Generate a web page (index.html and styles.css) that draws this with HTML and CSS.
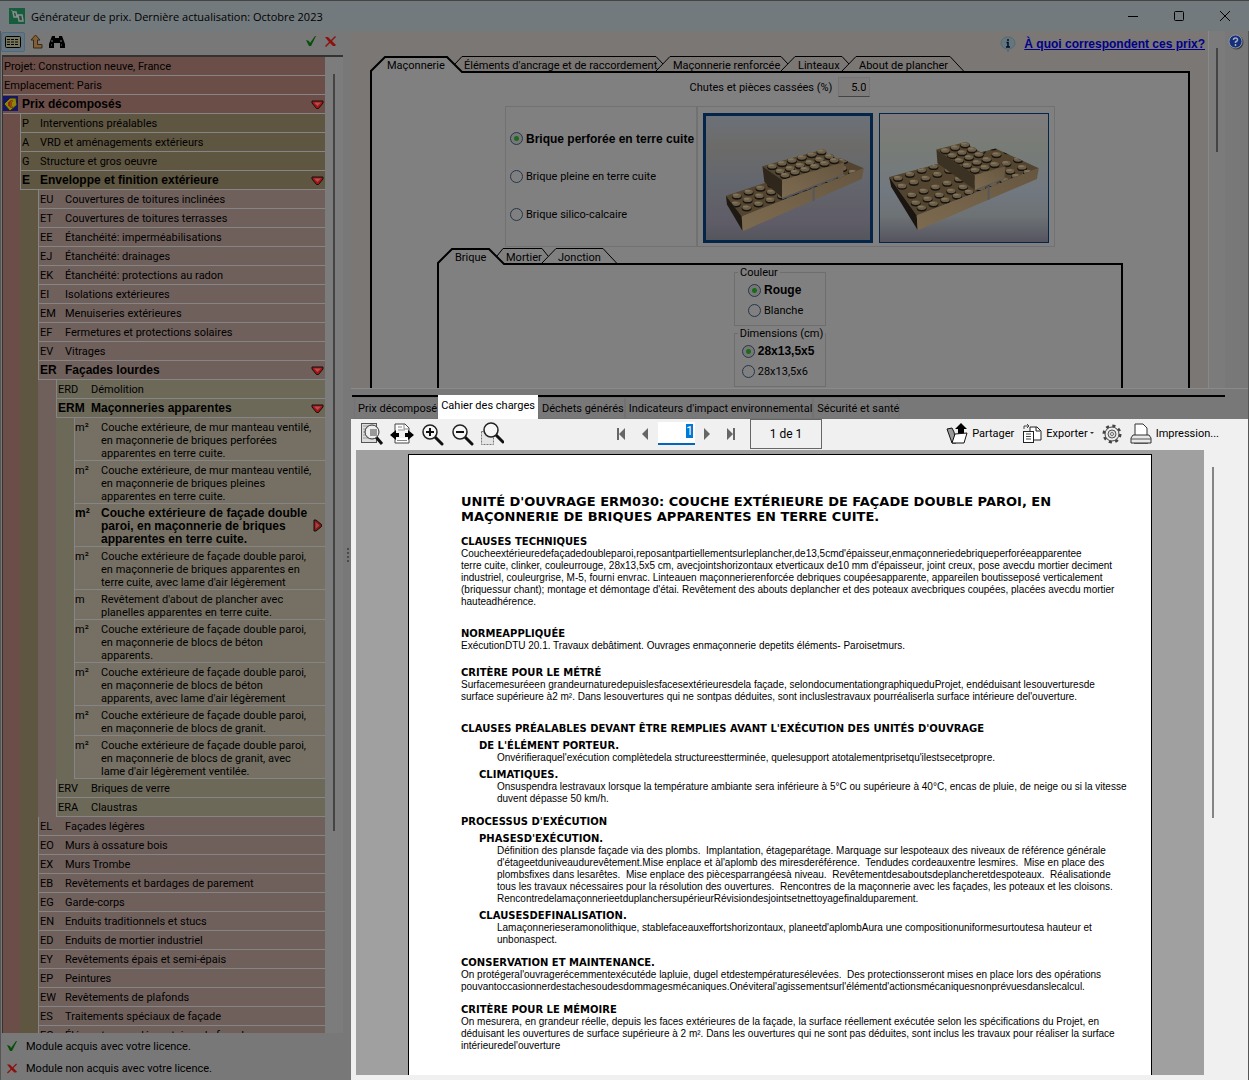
FILE: index.html
```
<!DOCTYPE html>
<html lang="fr">
<head>
    <meta charset="UTF-8">
    <meta name="viewport" content="width=device-width, initial-scale=1.0">
    <title>Générateur de prix</title>
    <link rel="stylesheet" href="styles.css">
</head>
<body>
    <!-- Shared icons -->
    <svg class="defs" width="0" height="0">
        <defs>
            <symbol id="check" viewBox="0 0 10 11"><path d="M0 4l3 1 1 2 5-7 1 0-5 10-2 0z" fill="#064f06"/></symbol>
            <symbol id="cross" viewBox="0 0 11 11"><path d="M0 1l3 0 3 3 4-4 1 1-4 4 4 4-1 1-2 0-3-3-4 4-1-1 4-4z" fill="#8d1010"/></symbol>
            <symbol id="down" viewBox="0 0 13 10"><path d="M1 1h11v2L7.500 8.500h-2L1 3z" fill="#a81414" stroke="#111" stroke-width="1"/><path d="M3 2.500h7L6.500 6z" fill="#b05050"/></symbol>
            <symbol id="right" viewBox="0 0 10 13"><path d="M1 1h2l5.500 4.500v2L3 12H1z" fill="#8d1414" stroke="#111" stroke-width="1"/><path d="M2.500 3v7l4-3.500z" fill="#a04545"/></symbol>
            <symbol id="glass" viewBox="0 0 24 24"><path d="M14 14l7 7" stroke="#111" stroke-width="3" stroke-linecap="round"/><circle cx="9" cy="9" r="7" fill="#f7f7f7" stroke="#222" stroke-width="1.500"/></symbol>
            <g id="hole"><ellipse cx="0" cy="1" rx="5" ry="3" fill="#16130e"/><ellipse rx="4.500" ry="2.400" fill="#6b5e48"/><ellipse cx="-1" cy="-1" rx="3" ry="1" fill="#82745c"/></g>
            <g id="row"><use href="#hole"/><use href="#hole" x="12" y="-4"/><use href="#hole" x="24" y="-8"/><use href="#hole" x="36" y="-12"/><use href="#hole" x="48" y="-16"/><use href="#hole" x="60" y="-20"/><use href="#hole" x="72" y="-24"/><use href="#hole" x="84" y="-28"/><use href="#hole" x="96" y="-32"/><use href="#hole" x="108" y="-36"/></g>
            <g id="short"><use href="#hole"/><use href="#hole" x="10" y="-3"/><use href="#hole" x="20" y="-6"/></g>
            <linearGradient id="clay" x1="0" y1="1" x2="1" y2="0"><stop offset="0" stop-color="#7d6b50"/><stop offset="1" stop-color="#665640"/></linearGradient>
            <clipPath id="slab1"><path d="M22 83L138 45l24 10L38 104z"/></clipPath>
            <clipPath id="slab2"><path d="M9 64L117 35l44 20L37 103z"/></clipPath>
        </defs>
    </svg>

    <header class="titlebar">
        <svg class="app-icon" width="16" height="16" viewBox="0 0 16 16"><rect width="16" height="16" fill="#175c3d"/><path d="M2 2l3 2" stroke="#6f7d77"/><path d="M4 4h3l1 5H5zM9 7h4l1 6h-4z" fill="#33493f" stroke="#85918c" stroke-width="1.500"/></svg>
        <h1>Générateur de prix. Dernière actualisation: Octobre 2023</h1>
        <div class="window-buttons">
            <button aria-label="Réduire"><svg width="12" height="12"><path d="M1 6.500h10" stroke="#000"/></svg></button>
            <button aria-label="Agrandir"><svg width="12" height="12"><rect x="1.500" y="1.500" width="9" height="9" rx="1" fill="none" stroke="#000"/></svg></button>
            <button aria-label="Fermer"><svg width="12" height="12"><path d="M1 1l10 10M11 1L1 11" stroke="#000"/></svg></button>
        </div>
    </header>

    <div class="workspace">
        <!-- Price tree -->
        <aside class="sidebar">
            <div class="side-tools">
                <button class="pressed" aria-label="Arbre"><svg width="16" height="12"><rect x=".5" y=".5" width="15" height="11" rx="1" fill="#77775c" stroke="#000"/><path d="M2 3.500h12M2 6h12M2 8.500h12" stroke="#000" stroke-dasharray="3 1"/></svg></button>
                <button aria-label="Remonter"><svg width="14" height="15"><path d="M5.500 1L1 6h2.500v8H12v-3.500H7.500V6H10z" fill="#80603a" stroke="#3c2710"/></svg></button>
                <button aria-label="Rechercher"><svg width="16" height="14"><path d="M3 1h3v2h4V1h3l3 8v4h-5V8H5v5H0V9z" fill="#000"/><path d="M3 5v2M2 10h1M12 5v2M12 10h1" stroke="#777"/></svg></button>
                <span class="licence">
                    <svg width="10" height="11"><use href="#check"/></svg>
                    <svg width="11" height="11"><use href="#cross"/></svg>
                </span>
            </div>
            <div class="tree">
                <div class="row red top">Projet: Construction neuve, France</div>
                <div class="row red top">Emplacement: Paris</div>
                <div class="row red open root"><svg width="16" height="16"><rect width="15" height="15" fill="#14146a"/><path d="M1 8l6-6h6l1 7-7 6z" fill="#8d8408" stroke="#222"/><path d="M10 5q-4-1-4 3t4 3M5 7h4M5 9h4" fill="none" stroke="#8a1010"/></svg><b>Prix décomposés</b><svg class="arrow" width="13" height="10"><use href="#down"/></svg></div>
                <div class="branch red">
                    <div class="row khaki"><i>P</i>Interventions préalables</div>
                    <div class="row khaki"><i>A</i>VRD et aménagements extérieurs</div>
                    <div class="row khaki"><i>G</i>Structure et gros oeuvre</div>
                    <div class="row khaki open"><i>E</i>Enveloppe et finition extérieure<svg class="arrow" width="13" height="10"><use href="#down"/></svg></div>
                    <div class="branch khaki">
                        <div class="row pink"><i>EU</i>Couvertures de toitures inclinées</div>
                        <div class="row pink"><i>ET</i>Couvertures de toitures terrasses</div>
                        <div class="row pink"><i>EE</i>Étanchéité: imperméabilisations</div>
                        <div class="row pink"><i>EJ</i>Étanchéité: drainages</div>
                        <div class="row pink"><i>EK</i>Étanchéité: protections au radon</div>
                        <div class="row pink"><i>EI</i>Isolations extérieures</div>
                        <div class="row pink"><i>EM</i>Menuiseries extérieures</div>
                        <div class="row pink"><i>EF</i>Fermetures et protections solaires</div>
                        <div class="row pink"><i>EV</i>Vitrages</div>
                        <div class="row pink open"><i>ER</i>Façades lourdes<svg class="arrow" width="13" height="10"><use href="#down"/></svg></div>
                        <div class="branch pink">
                            <div class="row olive"><i>ERD</i>Démolition</div>
                            <div class="row olive open"><i>ERM</i>Maçonneries apparentes<svg class="arrow" width="13" height="10"><use href="#down"/></svg></div>
                            <div class="branch olive">
                                <div class="row unit"><i>m²</i><span>Couche extérieure, de mur manteau ventilé,<br>en maçonnerie de briques perforées<br>apparentes en terre cuite.</span></div>
                                <div class="row unit"><i>m²</i><span>Couche extérieure, de mur manteau ventilé,<br>en maçonnerie de briques pleines<br>apparentes en terre cuite.</span></div>
                                <div class="row unit open"><i>m²</i><span>Couche extérieure de façade double<br>paroi, en maçonnerie de briques<br>apparentes en terre cuite.</span><svg class="arrow" width="10" height="13"><use href="#right"/></svg></div>
                                <div class="row unit"><i>m²</i><span>Couche extérieure de façade double paroi,<br>en maçonnerie de briques apparentes en<br>terre cuite, avec lame d'air légèrement</span></div>
                                <div class="row unit"><i>m</i><span>Revêtement d'about de plancher avec<br>planelles apparentes en terre cuite.</span></div>
                                <div class="row unit"><i>m²</i><span>Couche extérieure de façade double paroi,<br>en maçonnerie de blocs de béton<br>apparents.</span></div>
                                <div class="row unit"><i>m²</i><span>Couche extérieure de façade double paroi,<br>en maçonnerie de blocs de béton<br>apparents, avec lame d'air légèrement</span></div>
                                <div class="row unit"><i>m²</i><span>Couche extérieure de façade double paroi,<br>en maçonnerie de blocs de granit.</span></div>
                                <div class="row unit"><i>m²</i><span>Couche extérieure de façade double paroi,<br>en maçonnerie de blocs de granit, avec<br>lame d'air légèrement ventilée.</span></div>
                            </div>
                            <div class="row olive"><i>ERV</i>Briques de verre</div>
                            <div class="row olive"><i>ERA</i>Claustras</div>
                        </div>
                        <div class="row pink"><i>EL</i>Façades légères</div>
                        <div class="row pink"><i>EO</i>Murs à ossature bois</div>
                        <div class="row pink"><i>EX</i>Murs Trombe</div>
                        <div class="row pink"><i>EB</i>Revêtements et bardages de parement</div>
                        <div class="row pink"><i>EG</i>Garde-corps</div>
                        <div class="row pink"><i>EN</i>Enduits traditionnels et stucs</div>
                        <div class="row pink"><i>ED</i>Enduits de mortier industriel</div>
                        <div class="row pink"><i>EY</i>Revêtements épais et semi-épais</div>
                        <div class="row pink"><i>EP</i>Peintures</div>
                        <div class="row pink"><i>EW</i>Revêtements de plafonds</div>
                        <div class="row pink"><i>ES</i>Traitements spéciaux de façade</div>
                        <div class="row pink"><i>EC</i>Éléments complémentaires de façade</div>
                    </div>
                </div>
                <div class="thumb"></div>
            </div>
            <div class="legend"><svg width="10" height="11"><use href="#check"/></svg>Module acquis avec votre licence.</div>
            <div class="legend"><svg width="10" height="11"><use href="#cross"/></svg>Module non acquis avec votre licence.</div>
            <div class="grip"></div>
        </aside>

        <main>
            <!-- Options of the selected unit -->
            <section class="options">
                <div class="options-scroll">
                    <p class="prices-link">
                        <svg width="16" height="16"><path d="M8 1a6.500 6 0 0 1 1 12l-1 3-1-3A6.500 6 0 0 1 8 1z" fill="#64777e" stroke="#59696f"/><path d="M8 3v2M6.500 6.500H8v4.500M6 11h4" fill="none" stroke="#000b2a" stroke-width="1.500"/></svg>
                        <a href="#">À quoi correspondent ces prix?</a>
                    </p>
                    <div class="folder">
                        <div class="folder-tabs">
                            <svg width="600" height="17"><path d="M1 17v-2L15 1h62l15 15v1z" fill="#808080"/><g fill="none" stroke="#000"><path d="M85 8l7-7.500h194l7 7.500M286 15L300 .5h111l7 7.500M411 15L425 .5h47l7 7.500M472 15L486 .5h94l14 15"/><path d="M1 17v-2L15 1h62l15 15h2" stroke-width="2"/></g></svg>
                            <button class="t1">Maçonnerie</button><button class="t2">Éléments d'ancrage et de raccordement</button><button class="t3">Maçonnerie renforcée</button><button class="t4">Linteaux</button><button class="t5">About de plancher</button>
                        </div>
                        <div class="folder-body">
                            <p class="waste"><label for="waste">Chutes et pièces cassées (%)</label><input id="waste" type="text" value="5.0"></p>
                            <div class="brick-types">
                                <div class="choices">
                                    <label class="checked"><input type="radio" name="type" checked>Brique perforée en terre cuite</label>
                                    <label><input type="radio" name="type">Brique pleine en terre cuite</label>
                                    <label><input type="radio" name="type">Brique silico-calcaire</label>
                                </div>
                                <div class="pictures">
                                    <svg class="picture selected" width="170" height="130" viewBox="0 0 170 130">
                                        <path d="M22 83L138 45l24 10L38 104z" fill="#53442f"/>
                                        <g clip-path="url(#slab1)"><use href="#row" x="33" y="83"/><use href="#row" x="32" y="91"/><use href="#row" x="43" y="95"/></g>
                                        <path d="M22 83l16 21 1 15-16-27z" fill="#1e1912"/>
                                        <path d="M38 104L162 55l-2 11L39 119z" fill="url(#clay)"/>
                                        <path d="M111 75v13M79 86l62-25" stroke="#54585c" stroke-width="2"/>
                                        <path d="M59 53l58-16 25 12-63 18z" fill="#53442f"/>
                                        <use href="#short" x="69" y="53"/><use href="#short" x="99" y="44"/><use href="#short" x="77" y="58"/><use href="#short" x="107" y="49"/><use href="#short" x="82" y="62"/><use href="#short" x="112" y="53"/>
                                        <path d="M59 53l20 14v18L61 69z" fill="#2f271c"/>
                                        <path d="M79 67l63-18-1 12-62 24z" fill="url(#clay)"/>
                                    </svg>
                                    <svg class="picture" width="170" height="130" viewBox="0 0 170 130">
                                        <path d="M9 64L117 35l44 20L37 103z" fill="#53442f"/>
                                        <g clip-path="url(#slab2)"><use href="#row" x="18" y="65"/><use href="#row" x="22" y="73"/><use href="#row" x="32" y="82"/><use href="#row" x="36" y="90"/><use href="#row" x="42" y="95"/></g>
                                        <path d="M9 64l28 39 1 15-27-44z" fill="#1a150f"/>
                                        <path d="M37 103L161 55l-2 11L38 118z" fill="url(#clay)"/>
                                        <path d="M110 73v14M96 77l30-12" stroke="#54585c" stroke-width="2"/>
                                        <path d="M57 36l28-7 42 24-31 9z" fill="#53442f"/>
                                        <use href="#short" x="66" y="37"/><use href="#short" x="73" y="42"/><use href="#short" x="80" y="47"/><use href="#short" x="88" y="52"/><use href="#short" x="96" y="57"/>
                                        <path d="M57 36l39 26v15L58 50z" fill="#3c3224"/>
                                        <path d="M96 62l31-9-1 12-30 12z" fill="url(#clay)"/>
                                    </svg>
                                </div>
                            </div>
                            <div class="folder inner">
                                <div class="folder-tabs">
                                    <svg width="200" height="17"><path d="M1 17v-2L15 1h37l15 15v1z" fill="#808080"/><g fill="none" stroke="#000"><path d="M60 8l6-7.500h39l6 7.500M105 15L119 .5h47l14 15"/><path d="M1 17v-2L15 1h37l15 15h2" stroke-width="2"/></g></svg>
                                    <button class="t1">Brique</button><button class="t6">Mortier</button><button class="t7">Jonction</button>
                                </div>
                                <div class="folder-body">
                                    <fieldset>
                                        <legend>Couleur</legend>
                                        <label class="checked"><input type="radio" name="color" checked>Rouge</label>
                                        <label><input type="radio" name="color">Blanche</label>
                                    </fieldset>
                                    <fieldset class="sizes">
                                        <legend>Dimensions (cm)</legend>
                                        <label class="checked"><input type="radio" name="size" checked>28x13,5x5</label>
                                        <label><input type="radio" name="size">28x13,5x6</label>
                                    </fieldset>
                                </div>
                            </div>
                        </div>
                    </div>
                </div>
                <div class="options-bar"></div>
                <button class="help" aria-label="Aide"><svg width="16" height="16"><circle cx="8.500" cy="8.500" r="7" fill="#3e4144"/><circle cx="7.500" cy="7.500" r="6.500" fill="#142f7c" stroke="#8a93a5"/><path d="M5.500 6q0-2 2-2t2 2q0 1-2 2v1M7.500 10v2" fill="none" stroke="#aab" stroke-width="1.500"/></svg></button>
            </section>

            <nav class="tabs">
                <button>Prix décomposé</button><button class="active">Cahier des charges</button><button>Déchets générés</button><button>Indicateurs d'impact environnemental</button><button>Sécurité et santé</button>
            </nav>

            <!-- Report viewer -->
            <section class="viewer">
                <div class="viewer-tools">
                    <button aria-label="Page entière"><svg width="24" height="24"><rect x="1.500" y="1.500" width="15" height="19" fill="#ddd" stroke="#555"/><path d="M3 4h11M3 7h11M3 10h11M3 13h11M3 16h11" stroke="#999"/><path d="M16 15l6 7" stroke="#111" stroke-width="3"/><circle cx="12" cy="10" r="7" fill="#eee" stroke="#333"/><path d="M10 7h7v7h-7z" fill="#999"/></svg></button>
                    <button aria-label="Largeur de page"><svg width="24" height="24"><path d="M5 9V2h10l4 4v3M5 16v5h14v-5" fill="#fff" stroke="#444"/><path d="M8 5h4M8 8h7M14 2v5h5M7 18.500h10" fill="none" stroke="#888"/><path d="M0 13l6-5v3h3v4H6v3zM24 13l-6-5v3h-3v4h3v3z" fill="#000"/></svg></button>
                    <button aria-label="Zoom avant"><svg width="24" height="24"><use href="#glass" x="1" y="1" width="24" height="24"/><path d="M10 6v8M6 10h8" stroke="#111" stroke-width="2"/></svg></button>
                    <button aria-label="Zoom arrière"><svg width="24" height="24"><use href="#glass" x="1" y="1" width="24" height="24"/><path d="M6 10h8" stroke="#111" stroke-width="2"/></svg></button>
                    <button aria-label="Zoom fenêtre"><svg width="24" height="24"><path d="M1.500 9.500h12v13h-12z" fill="#e4e4e4" stroke="#777" stroke-dasharray="2 1"/><use href="#glass" x="2" y="-1" width="24" height="24"/></svg></button>
                    <div class="pager">
                        <button aria-label="Première page"><svg width="10" height="12"><path d="M1 0h2v12H1zM9 0v12L3 6z" fill="#666"/></svg></button>
                        <button aria-label="Page précédente"><svg width="10" height="12"><path d="M8 0v12L2 6z" fill="#666"/></svg></button>
                        <input id="page" type="text" value="1" aria-label="Page">
                        <button aria-label="Page suivante"><svg width="10" height="12"><path d="M2 0v12l6-6z" fill="#666"/></svg></button>
                        <button aria-label="Dernière page"><svg width="10" height="12"><path d="M7 0h2v12H7zM1 0v12l6-6z" fill="#666"/></svg></button>
                        <span class="count">1 de 1</span>
                    </div>
                    <div class="actions">
                        <button><svg width="22" height="22"><path d="M1 6l5-1 2 4 2 11H6z" fill="#999" stroke="#111"/><path d="M15 0l6 6h-3v5h-6V6H9z" fill="#000"/><path d="M9 11l12-1-3 10H6z" fill="#fff" stroke="#111"/></svg>Partager</button>
                        <button class="export"><svg width="20" height="20"><path d="M8 3h7l4 4v9H8z" fill="#fff" stroke="#222"/><path d="M14 3v4h4" fill="none" stroke="#222"/><rect x="1.500" y="7.500" width="10" height="11" fill="#fff" stroke="#222"/><path d="M4 10h5M4 12.500h5M4 15h5M2 5V2h4M5 0l2 2-2 2" fill="none" stroke="#444"/></svg>Exporter<span class="caret"></span></button>
                        <button aria-label="Réglages"><svg width="20" height="20"><circle cx="10" cy="10" r="8" fill="none" stroke="#444" stroke-width="3" stroke-dasharray="3 3.300"/><circle cx="10" cy="10" r="7" fill="#ececec" stroke="#444"/><circle cx="10" cy="10" r="4" fill="#ddd" stroke="#555"/><circle cx="10" cy="10" r="1.500" fill="#fff" stroke="#666"/></svg></button>
                        <button class="print"><svg width="22" height="22"><path d="M5 13V1h8l4 4v8" fill="#fff" stroke="#333"/><path d="M3 12h16l2 3v5H1v-5z" fill="#e8e8e8" stroke="#333"/><path d="M1 16h20M4 20.500h14" stroke="#555"/></svg>Impression...</button>
                    </div>
                </div>
                <div class="desk">
                    <article class="sheet">
                        <h2>UNITÉ D'OUVRAGE ERM030: COUCHE EXTÉRIEURE DE FAÇADE DOUBLE PAROI, EN<br>MAÇONNERIE DE BRIQUES APPARENTES EN TERRE CUITE.</h2>
                        <h3>CLAUSES TECHNIQUES</h3>
                        <p>Coucheextérieuredefaçadedoubleparoi,reposantpartiellementsurleplancher,de13,5cmd'épaisseur,enmaçonneriedebriqueperforéeapparentee<br>terre cuite, clinker, couleurrouge, 28x13,5x5 cm, avecjointshorizontaux etverticaux de10 mm d'épaisseur, joint creux, pose avecdu mortier deciment<br>industriel, couleurgrise, M-5, fourni envrac. Linteauen maçonnerierenforcée debriques coupéesapparente, appareilen boutisseposé verticalement<br>(briquessur chant); montage et démontage d'étai. Revêtement des abouts deplancher et des poteaux avecbriques coupées, placées avecdu mortier<br>hauteadhérence.</p>
                        <h3 class="far">NORMEAPPLIQUÉE</h3>
                        <p>ExécutionDTU 20.1. Travaux debâtiment. Ouvrages enmaçonnerie depetits éléments- Paroisetmurs.</p>
                        <h3 class="mid">CRITÈRE POUR LE MÉTRÉ</h3>
                        <p>Surfacemesuréeen grandeurnaturedepuislesfacesextérieuresdela façade, selondocumentationgraphiqueduProjet, endéduisant lesouverturesde<br>surface supérieure à2 m². Dans lesouvertures qui ne sontpas déduites, sont incluslestravaux pourréaliserla surface intérieure del'ouverture.</p>
                        <h3 class="far">CLAUSES PRÉALABLES DEVANT ÊTRE REMPLIES AVANT L'EXÉCUTION DES UNITÉS D'OUVRAGE</h3>
                        <h4>DE L'ÉLÉMENT PORTEUR.</h4>
                        <p class="deep">Onvérifieraquel'exécution complètedela structureestterminée, quelesupport atotalementprisetqu'ilestsecetpropre.</p>
                        <h4>CLIMATIQUES.</h4>
                        <p class="deep">Onsuspendra lestravaux lorsque la température ambiante sera inférieure à 5°C ou supérieure à 40°C, encas de pluie, de neige ou si la vitesse<br>duvent dépasse 50 km/h.</p>
                        <h3>PROCESSUS D'EXÉCUTION</h3>
                        <h4>PHASESD'EXÉCUTION.</h4>
                        <p class="deep">Définition des plansde façade via des plombs.&nbsp; Implantation, étageparétage. Marquage sur lespoteaux des niveaux de référence générale<br>d'étageetduniveaudurevêtement.Mise enplace et àl'aplomb des miresderéférence.&nbsp; Tendudes cordeauxentre lesmires.&nbsp; Mise en place des<br>plombsfixes dans lesarêtes.&nbsp; Mise enplace des piècesparrangéesà niveau.&nbsp; Revêtementdesaboutsdeplancheretdespoteaux.&nbsp; Réalisationde<br>tous les travaux nécessaires pour la résolution des ouvertures.&nbsp; Rencontres de la maçonnerie avec les façades, les poteaux et les cloisons.<br>RencontredelamaçonnerieetduplanchersupérieurRévisiondesjointsetnettoyagefinalduparement.</p>
                        <h4>CLAUSESDEFINALISATION.</h4>
                        <p class="deep">Lamaçonnerieseramonolithique, stablefaceauxeffortshorizontaux, planeetd'aplombAura une compositionuniformesurtoutesa hauteur et<br>unbonaspect.</p>
                        <h3>CONSERVATION ET MAINTENANCE.</h3>
                        <p>On protégeral'ouvragerécemmentexécutéde lapluie, dugel etdestempératuresélevées.&nbsp; Des protectionsseront mises en place lors des opérations<br>pouvantoccasionnerdestachesoudesdommagesmécaniques.Onéviteral'agissementsurl'élémentd'actionsmécaniquesnonprévuesdanslecalcul.</p>
                        <h3>CRITÈRE POUR LE MÉMOIRE</h3>
                        <p>On mesurera, en grandeur réelle, depuis les faces extérieures de la façade, la surface réellement exécutée selon les spécifications du Projet, en<br>déduisant les ouvertures de surface supérieure à 2 m². Dans les ouvertures qui ne sont pas déduites, sont inclus les travaux pour réaliser la surface<br>intérieuredel'ouverture</p>
                    </article>
                    <div class="desk-bar"></div>
                </div>
            </section>
        </main>
    </div>

    <script>
        // Page number is ready to be typed over
        window.onload = function () {
            document.getElementById("page").select();
        };
    </script>
</body>
</html>
```
FILE: styles.css
```
* {
    box-sizing: border-box;
}

body {
    margin: 0;
    height: 100vh;
    display: flex;
    flex-direction: column;
    overflow: hidden;
    font-family: Roboto, "Liberation Sans", sans-serif;
    font-size: 11px;
    color: #000;
    background: #787878;
    border-top: 1px solid #444;
}

h1, h2, h3, h4, p {
    margin: 0;
}

.defs {
    position: absolute;
}

svg {
    display: block;
    flex: none;
}

button {
    display: flex;
    align-items: center;
    padding: 0;
    border: none;
    background: none;
    font: inherit;
    color: inherit;
    white-space: nowrap;
}

input {
    font: inherit;
    color: inherit;
}

input:focus {
    outline: none;
}

/* Title bar */
.titlebar {
    display: flex;
    align-items: center;
    flex: none;
    height: 30px;
    padding: 0 18px 0 9px;
    background: #737a7d;
}

.titlebar h1 {
    margin-left: 6px;
    font: 11px "Open Sans", sans-serif;
}

.window-buttons {
    display: flex;
    gap: 34px;
    margin-left: auto;
}

.workspace {
    display: flex;
    flex: 1;
    min-height: 0;
}

/* Sidebar */
.sidebar {
    position: relative;
    display: flex;
    flex-direction: column;
    flex: none;
    width: 351px;
    padding-bottom: 1px;
    border-left: 1px solid #555;
}

.side-tools {
    display: flex;
    align-items: center;
    gap: 5px;
    height: 24px;
    padding: 0 15px 3px 0;
}

.side-tools .pressed {
    height: 20px;
    padding: 0 3px;
    border: 1px solid #4e6a80;
    border-radius: 2px;
    background: #667480;
}

.licence {
    display: flex;
    gap: 9px;
    margin-left: auto;
}

.tree {
    position: relative;
    flex: 1;
    min-height: 0;
    margin: 0 8px 0 1px;
    padding-right: 18px;
    overflow: hidden;
    border: solid #333;
    border-width: 2px 0 0 1px;
    background: #7c7c7c;
}

.thumb {
    position: absolute;
    top: 17px;
    right: 8px;
    width: 2px;
    height: 757px;
    background: #444;
}

.red { background: #6b4e48; }
.khaki { background: #5e5641; }
.pink { background: #6f605c; }
.olive { background: #6c6959; }
.unit { background: #757063; }

.branch {
    padding-left: 18px;
}

.tree > .branch {
    padding-left: 17px;
}

.row {
    position: relative;
    display: flex;
    align-items: center;
    height: 19px;
    padding-left: 1px;
    border-left: 1px solid #858585;
    border-bottom: 1px solid #858585;
    white-space: nowrap;
}

.row.top {
    border-left: none;
}

.row.root {
    padding-left: 0;
    border-left: none;
}

.row.root b {
    margin-left: 3px;
}

.row i {
    flex: none;
    width: 18px;
    font-style: normal;
}

.row.pink i {
    width: 25px;
}

.row.olive i {
    width: 33px;
}

.row.unit {
    align-items: flex-start;
    height: auto;
    padding: 3px 0 0;
    line-height: 13px;
}

.row.unit i {
    width: 26px;
}

.row.open, .checked {
    font-family: "Liberation Sans", Arial, sans-serif;
    font-size: 12px;
    font-weight: bold;
}

.arrow {
    position: absolute;
    right: 1px;
    top: 5px;
}

.unit .arrow {
    top: 15px;
    right: 2px;
}

.legend {
    display: flex;
    align-items: center;
    gap: 9px;
    height: 22px;
    padding-left: 6px;
}

.tree + .legend {
    margin-top: 2px;
}

.grip {
    position: absolute;
    right: 2px;
    top: 517px;
    width: 2px;
    height: 14px;
    background: repeating-linear-gradient(#4a4a4a 0 2px, transparent 2px 4px);
}

/* Options */
main {
    display: flex;
    flex-direction: column;
    flex: 1;
    min-width: 0;
    border-right: 1px solid #555;
}

.options {
    display: flex;
    flex: none;
    height: 357px;
}

.options-scroll {
    flex: 1;
    min-width: 0;
    overflow: hidden;
    padding: 0 18px 0 19px;
    background: #7a7775;
}

.options-bar {
    position: relative;
    width: 17px;
    background: #7b7b7b;
    border-left: 1px solid #888;
}

.options-bar::before {
    content: "";
    position: absolute;
    left: 7px;
    top: 17px;
    width: 2px;
    height: 104px;
    background: #444;
}

.help {
    align-self: flex-start;
    margin: 3px 4px 0 3px;
}

.prices-link {
    display: flex;
    align-items: center;
    justify-content: flex-end;
    gap: 8px;
    height: 25px;
    margin-right: -15px;
}

.prices-link a {
    font: bold 12px "Liberation Sans", Arial, sans-serif;
    color: #00008c;
}

.folder-tabs {
    position: relative;
    display: flex;
    height: 17px;
    margin-bottom: -2px;
    padding-left: 17px;
}

.folder-tabs svg {
    position: absolute;
    left: 0;
    top: 0;
}

.folder-tabs button {
    position: relative;
    height: 18px;
}

.folder .t1 { width: 77px; }
.folder .t2 { width: 209px; }
.folder .t3 { width: 125px; }
.folder .t4 { width: 61px; }
.inner .t1 { width: 51px; }
.inner .t6 { width: 52px; }

.inner .folder-tabs {
    padding-left: 18px;
}

.folder-body {
    border: 2px solid #000;
    background: #808080;
}

.waste {
    display: flex;
    align-items: center;
    justify-content: center;
    gap: 6px;
    padding: 4px 0 9px;
}

.waste input {
    width: 32px;
    height: 20px;
    padding: 0 3px;
    text-align: right;
    background: #7e7b7b;
    border: 1px solid #747474;
    border-bottom-color: #444;
}

.brick-types {
    display: flex;
    width: 550px;
    height: 141px;
    margin: 0 auto 1px;
    border: 1px solid #717171;
}

.choices {
    display: flex;
    flex-direction: column;
    justify-content: center;
    gap: 24px;
    width: 193px;
    padding-left: 4px;
    border-right: 2px solid #717171;
}

.choices label, fieldset label {
    display: flex;
    align-items: center;
    gap: 3px;
    height: 14px;
    white-space: nowrap;
}

input[type="radio"] {
    appearance: none;
    flex: none;
    width: 13px;
    height: 13px;
    margin: 0;
    border: 1px solid #26364a;
    border-radius: 50%;
}

input[type="radio"]:checked {
    background: radial-gradient(circle, #1a6b1a 0 2px, #777 3px);
}

.pictures {
    display: flex;
    gap: 6px;
    padding: 6px 5px;
}

.picture {
    border: 1px solid #03254a;
    background: linear-gradient(#7e7c7e, #787c76 25%, #727880 60%, #6d7275 80%, #55545f);
}

.picture.selected {
    outline: 2px solid #03254a;
    outline-offset: -3px;
    background: linear-gradient(#6c717a, #6c6b69 25%, #64676d 50%, #5f5c67 85%, #53555b);
}

.inner {
    margin: 0 65px;
}

.inner .folder-body {
    height: 160px;
    padding-top: 1px;
}

fieldset {
    width: 92px;
    margin: 0 auto 1px;
    padding: 4px 0 0 13px;
    height: 60px;
    border: 1px solid #6e6e6e;
}

fieldset legend {
    height: 13px;
    margin-left: -10px;
    padding: 0 2px;
    white-space: nowrap;
}

fieldset label {
    margin-bottom: 6px;
}

fieldset.sizes {
    padding-left: 7px;
}

.sizes legend {
    margin-left: -4px;
}

/* Lower tabs */
.tabs {
    display: flex;
    align-items: flex-end;
    flex: none;
    height: 31px;
    padding-left: 3px;
    border-top: 1px solid #8a8a8a;
    background: linear-gradient(#000, #000) 1px 6px / calc(100% - 24px) 2px no-repeat #787878;
}

.tabs button {
    height: 22px;
    padding: 0 0 0 3px;
    border: 1px solid #727272;
}

.tabs .active {
    height: 24px;
    padding: 0 2px 3px;
    background: #fff;
    border-color: #fff;
}

/* Viewer */
.viewer {
    display: flex;
    flex-direction: column;
    flex: 1;
    min-height: 0;
    padding: 0 0 5px 5px;
    background: #f0f0f0;
}

.viewer-tools {
    display: flex;
    align-items: center;
    gap: 6px;
    flex: none;
    height: 31px;
    padding: 0 29px 2px 4px;
}

.pager {
    display: flex;
    align-items: center;
    gap: 14px;
    margin: 0 auto 0 106px;
}

.pager input {
    width: 37px;
    height: 23px;
    margin: 0 -7px 0 -6px;
    padding: 0 2px 4px;
    font-size: 12px;
    text-align: right;
    background: #fff;
    border: none;
    border-bottom: 2px solid #0067c0;
}

.pager input::selection {
    color: #fff;
    background: #0078d7;
}

.count {
    width: 72px;
    height: 30px;
    border: 1px solid #666;
    font-size: 12px;
    line-height: 28px;
    text-align: center;
}

.actions {
    display: flex;
    align-items: center;
    gap: 8px;
}

.actions button {
    gap: 4px;
}

.caret {
    margin-left: -2px;
    border: 2px solid transparent;
    border-top-color: #333;
}

.desk {
    position: relative;
    flex: 1;
    min-height: 0;
    margin-right: 44px;
    padding: 4px 52px 0;
    background: #a0a0a0;
}

.desk-bar {
    position: absolute;
    right: -10px;
    top: 17px;
    width: 2px;
    height: 351px;
    background: #858585;
}

.sheet {
    height: 100%;
    padding: 39px 0 0 52px;
    overflow: hidden;
    border: 1px solid #000;
    border-bottom: none;
    background: #fff;
    font-family: "Liberation Sans", Arial, sans-serif;
    font-size: 10px;
    line-height: 12px;
    white-space: nowrap;
}

.sheet h2, .sheet h3, .sheet h4 {
    font-family: "DejaVu Sans", Verdana, sans-serif;
}

.sheet h2 {
    padding-bottom: 1px;
    font-size: 13px;
    line-height: 15px;
}

.sheet h3 {
    margin-top: 11px;
    font-size: 10px;
}

.sheet h3.mid {
    margin-top: 15px;
}

.sheet h3.far {
    margin-top: 20px;
}

.sheet h4 {
    margin: 5px 0 0 18px;
    font-size: 10px;
}

.sheet .deep {
    margin-left: 36px;
}
```
